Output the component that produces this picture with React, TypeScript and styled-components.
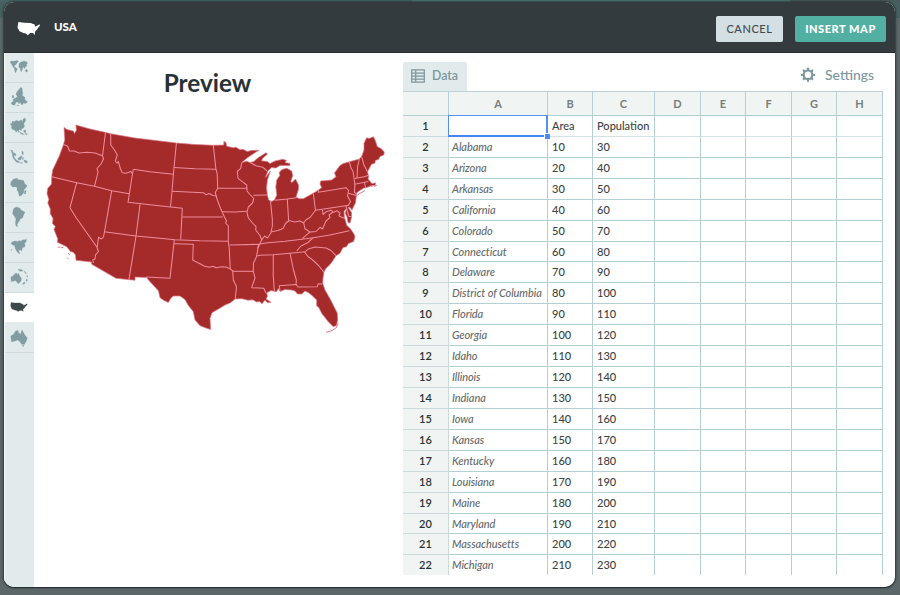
import React from "react";
import styled, { createGlobalStyle, css } from "styled-components";

const GlobalStyle = createGlobalStyle`
  * { box-sizing: border-box; }
  html, body { margin: 0; height: 100%; overflow: hidden; }
  body { font-family: Lato, "Liberation Sans", sans-serif; }
`;

const Backdrop = styled.div`
  width: 900px;
  height: 595px;
  padding: 2px 5px 8px 4px;
  background:
    linear-gradient(90deg, #456664 0 412px, #4d7a74 412px 790px, #4a5b5d 790px) 0 0 / 100% 2px no-repeat,
    linear-gradient(#46605f 0 18px, #5c676a 18px) 0 0 / 100% 100%;
`;

const Modal = styled.div`
  height: 585px;
  display: flex;
  flex-direction: column;
  border-radius: 10px;
  overflow: hidden;
  background: #fff;
  box-shadow: 0 1px 1px #263033, 0 0 2px 1px rgba(35, 45, 48, 0.75);
`;

const Header = styled.header`
  height: 51px;
  flex: none;
  display: flex;
  align-items: center;
  padding: 3px 9px 0 13px;
  background: #333b3e;
  border-bottom: 1px solid #262e30;
`;

const HeaderTitle = styled.h1`
  flex: 1;
  margin: 0 0 3px 13px;
  font-size: 11.5px;
  line-height: 16px;
  font-weight: 900;
  color: #fff;
`;

const Button = styled.button<{ $primary?: boolean }>`
  width: ${(p) => (p.$primary ? 91 : 67)}px;
  height: 26px;
  margin-left: ${(p) => (p.$primary ? 12 : 0)}px;
  padding: 0;
  border: 0;
  border-radius: 2px;
  font: ${(p) => (p.$primary ? 900 : 500)} 11px/26px Lato, sans-serif;
  letter-spacing: ${(p) => (p.$primary ? 0.55 : 0.6)}px;
  white-space: nowrap;
  color: ${(p) => (p.$primary ? "#fff" : "#3e4a4d")};
  background: ${(p) => (p.$primary ? "#52b0a3" : "#d3dfe2")};
`;

const Body = styled.div`
  flex: 1;
  min-height: 0;
  display: flex;
`;

const Sidebar = styled.nav`
  width: 30px;
  flex: none;
  border-left: 1px solid #f5f8f8;
  background: #e1ebec;
`;

const MapTab = styled.div<{ $active?: boolean }>`
  height: 30px;
  display: flex;
  align-items: center;
  justify-content: center;
  padding: 0 2px 1px 0;
  border-bottom: 1px solid #d0dbdd;
  ${(p) =>
    p.$active &&
    css`
      background: #fff;
      border-color: #e4ebec;
      padding-bottom: 3px;
    `}
  color: ${(p) => (p.$active ? "#3c484a" : "#829da2")};
`;

const PreviewPane = styled.section`
  width: 369px;
  flex: none;
  padding: 14px 0 0 6px;
`;

const PreviewTitle = styled.h2`
  width: 335px;
  margin: 0;
  text-align: center;
  font-size: 24.3px;
  line-height: 32px;
  font-weight: 700;
  color: #273235;
`;

const MapImage = styled.svg`
  display: block;
  margin-top: 16px;
`;

const DataPane = styled.section`
  width: 480px;
  flex: none;
  padding-top: 9px;
`;

const PaneBar = styled.div`
  height: 29px;
  display: flex;
  justify-content: space-between;
`;

const DataTab = styled.div`
  width: 64px;
  height: 29px;
  display: flex;
  align-items: center;
  gap: 7px;
  padding: 0 0 3px 8px;
  border-radius: 2px 2px 0 0;
  background: #e1ebec;
  color: #7b979d;
  font-size: 12.3px;
  font-weight: 600;
  svg { position: relative; top: 1px; }
`;

const SettingsLink = styled.div`
  display: flex;
  align-items: center;
  gap: 9px;
  padding: 0 9px 5px 0;
  color: #7b979d;
  font-size: 13.9px;
  font-weight: 500;
`;

const SheetFrame = styled.div`
  height: 484px;
  overflow: hidden;
  border-top: 1px solid #bcd2d5;
`;

const Sheet = styled.div`
  display: grid;
  grid-template-columns: 46px 99px 45px 62px 46px 45px 46px 45px 46px;
  grid-template-rows: 24px;
  grid-auto-rows: 20.93px;
  font-size: 11px;
`;

const HeadCell = styled.div`
  padding-top: 1px;
  border-right: 1px solid #b5d0d4;
  border-bottom: 1px solid #b5d0d4;
  background: #f0f5f4;
  text-align: center;
  line-height: 21px;
  font-weight: 700;
  color: #777d7d;
`;

const RowCell = styled(HeadCell)`
  padding: 0;
  border-color: #cbdadb;
  line-height: 19px;
  font-size: 11px;
  font-weight: 600;
  color: #2c3334;
`;

const Cell = styled.div<{ $name?: boolean; $first?: boolean }>`
  position: relative;
  padding-left: ${(p) => (p.$name ? 3 : 4)}px;
  border-right: 1px solid #b5d0d4;
  border-bottom: 1px solid ${(p) => (p.$first ? "#d3e2e4" : "#b5d0d4")};
  line-height: 19px;
  white-space: nowrap;
  color: ${(p) => (p.$name ? "#666b6c" : "#3b4445")};
  font-style: ${(p) => (p.$name ? "italic" : "normal")};
  font-weight: 500;
  letter-spacing: ${(p) => (p.$name ? "-0.09px" : "0")};
`;

const Selection = styled.div`
  position: absolute;
  inset: -1px -1px -1px -1px;
  border: 1px solid #5292f7;
  border-bottom: 2px solid #4385f5;
  border-right-width: 2px;
`;

const FillHandle = styled.div`
  position: absolute;
  z-index: 2;
  right: -3px;
  bottom: -3px;
  width: 6px;
  height: 6px;
  border: 1px solid #fff;
  border-width: 1px 0 0 1px;
  background: #4b8df8;
`;

const USA =
  "M64 127.5L67 129.5 73.3 131 74.5 133.5 76.5 130 75.8 125 90 129 105 132.3 110.7 133.7 135 138 160 141 176.7 143 195 144.5 213.3 145.3 223.8 145 223.8 141.5 225.8 142.3 226.8 146.3 233.3 147.7 236 147.3 240 149.7 243 149.3 247.3 151.5 251 150.5 259 150.2 253 154 247 158 241.7 162.6 246.7 161.2 250 162.5 254 161.5 257 158.5 262 155.3 266 152.8 267.5 154 262.5 158.5 261.5 160.8 267.3 161.5 270 163.6 275 161 283 159.3 286.5 160.5 285 162.5 289.8 163.5 290 165.6 284 165.6 280 165.4 276 168 271.5 167.6 267.8 171 265.5 177.4 270.5 171 267.5 179.5 266.5 188 267.4 195 268.6 200 271.5 201.4 274.5 200 276.8 195 275.8 187 276.7 180 279.8 175.5 279.2 172.5 282 169.5 286.7 168.3 291.7 171 292.7 175.7 290.7 181.7 292 182.5 295.5 179 298.5 185 298.5 189 296 197.2 299.3 198.7 303.3 198.7 310 195 315 192.3 321.7 187.7 320 184 320.7 181 331.7 180 336 176.7 334.5 173 340 165.5 343.3 163.5 359.3 159 361.7 156.3 364 150 364 143.3 366.7 137.7 369 138.5 373.5 136.8 375.5 141 377.3 146.8 381 148.5 384.3 152 383.8 155 380 156.5 378.5 159.5 375.5 160.3 374.8 163.3 371.5 164.2 369.5 168 367.5 171.8 368.7 177 368 179 372 183.7 375.5 182.8 375.3 185.3 371 185.8 368.3 187 363.3 188.3 359 191 356.5 193 356.3 196.5 355.5 202.7 351.9 210.2 350.2 207.5 348.2 207.4 351.5 212.5 351.6 217 350.1 223 348 222.5 347 217 345.3 213 346.6 208.3 344 211 344.4 217 345.8 222 346.8 225.5 350.2 228.5 354 234 355 237 353.5 241.5 348.5 243.5 346.4 246.8 343 247.5 340 253.3 336 255.7 333 260.5 330 264.5 325.4 269 324 272.3 323 278 322.7 283.3 325 290 330.7 300 337.3 313.3 337.7 320 336.4 325.5 333.3 326.7 328.3 321.7 321.7 313.3 318.5 307 316.7 306 316.7 300 312 295.5 308.7 292.7 305 291 301.7 294 297.5 294 295 291 291.7 290 285 289.5 280 291.5 278.3 288.5 276.5 291.7 271 290.6 266.7 292.8 267.4 296.3 266 299 271 302.3 267.8 302.8 264.8 300.2 262 303.8 259.5 301.4 256.7 302 252.8 299.8 248 300.2 242 298.7 235 299 230.5 302.8 225 305 218.5 309 212 312.7 210 318.3 210.7 329.5 206 328 200 325.7 195 320 193.3 311.7 188 305 185 299.6 180 296 173.3 296 171 298 168.3 302.5 164 300.5 160 297.7 158.5 291 154.5 286.5 150 281.7 146.5 277.5 135 277 135 280.3 116 278.3 91.7 264.3 91.5 262 76 260.3 75.5 255 73.3 252.3 70.5 251.5 66.7 246.7 57.3 242.3 57.8 239 54 229.5 55.3 226.5 52.5 223.5 53 218.5 50.2 213.5 50.3 209 47.8 203 48.9 199.5 47 193.5 47.7 188.5 51.5 184 51.7 176.7 52.7 170 59.5 155.5 63.3 145 64.8 140Z";

const STATE_BORDERS = [
  "M63.3 144.5L67.5 146 69.5 151 74 151 79 153 87 152.2 95 153 102.5 155.7",
  "M105.5 132.5L102.5 155.7 103.5 159 101 164 97 168.5 98 172 94.5 186.3",
  "M51.7 176.7L76.7 182.7 94.5 186.3 111.7 190.7 129.3 193.7",
  "M110.7 133.7L110.8 145 114.5 150 117.3 155 115.3 161 117 163.2 118.3 161.5 120.5 169 122.3 172.7 126 173.2 131 171.5 132 173.5",
  "M133.3 169.3L131.5 180 128 202.3 150 204.8 182.3 208.3",
  "M133.3 169.3L150 171.7 173.3 174.3",
  "M76.7 182.7L70 207.7 76 217.5 96.7 246.7 98.5 251.5 95.5 254.8 95 259 92.8 260 93.5 263",
  "M111.7 190.7L105.7 225 103.5 237 101.5 239 98.5 237.2 97.3 246.7",
  "M104.3 231.7L136 236 160 238.2 175 239.7 200 240.8 228.3 241.3",
  "M140 204.3L136 236 129 279.3",
  "M176.4 143L174 167.7 172 191.3 170.5 206.7",
  "M174 167.5L195 168.8 216 169.3",
  "M172 191.3L203.3 192.7 206 194.7 209 193.5 213 195.5 216.5 196",
  "M213.3 145.3L214.5 156 215.8 168.3 217.2 174 217.7 188.3 215.3 192.5 217 199 220 207 222 211.7",
  "M217.7 188.3L247.3 188.3",
  "M222 211.7L235 211.9 246.7 211.3",
  "M222 211.7L224.5 217 226.5 221 225.6 223 228.3 226 228.3 241.7 229.3 249 230.2 268.3",
  "M241.7 162.5L240.7 168.3 237.3 171.5 238 178.3 242 181.3 246.7 185 247 191 250 194.5 253.8 198.5 252.5 203 248.3 207 247 212.5 248.4 218 252.5 223 256 226.7 255.7 230 260 235.5 261.7 240 259.7 244 258 248 256.5 256.7 253.5 263 253.3 271.3 255 278 251.7 287.7 263.8 288.3 266 293",
  "M250 162.5L256 165.7 263 167.3 267 171",
  "M253.3 195.3L268 195",
  "M182.3 208.3L180.7 239.3",
  "M182.3 217L222.7 217",
  "M174.3 240L170 278.3 146 277",
  "M174 243.7L193.3 244.3 192.7 260 196 261.8 200 263.8 204 266 209 267.2 213 266.2 216 267.8 222 266.7 226 267 230 268.7 232.7 271 233.3 280 236.5 286.7 235.3 298.7",
  "M229.3 245L258.8 244.3 257.5 248.5",
  "M232.7 271.3L253.3 271.3",
  "M257.3 256L260 255.3 273.3 254.7 290 253.2 305 251.7",
  "M259.7 244L268 242.8 285 241.3 304 239 313.3 237.8 330 235 349.3 230.7",
  "M313.3 237.7L308 242.5 301 246 296.7 251",
  "M305 251.7L309 248.7 315 247 321 247.4 326 248 331 250.5 336 255.7",
  "M304.5 252L308 256.5 313.3 260.5 319 266 324 272.3",
  "M273.3 255L273.2 275 274.3 291",
  "M290 253.3L293.5 270 296.3 280 296 285",
  "M280 291L279.3 285.8 296 284.5 298 287 317.3 286.7 318.2 283.7 322 284",
  "M261.7 240L264.5 236 267.5 238 271.7 231.8 278 230.5 283 228.5 285.5 223.5 289 220.5 294.5 222 300 221 303.5 223 306 219.7 310 217.5 315.5 210.3",
  "M303.7 222.5L304.8 228.5 310 232 316 231.5 320 227.3 322.5 229 326 221 330 217.5 329 215 333 212",
  "M310 232L306.5 234.8 302.3 238.7",
  "M270.5 201L272.3 219 272.4 226 271 232",
  "M275 200.2L287.3 199 296.3 197.8",
  "M287.3 199L288.7 221.7",
  "M313.3 193.5L315.5 210.3 349 205.3",
  "M318.3 190L318.3 192.3 346 187.7 348.6 190.5 347.5 196 350.5 201.5 348.2 205.5",
  "M348.3 193.3L356.3 195.5",
  "M322.5 210L323 214.5 326 211.8 331 210.2 333.5 212.3 337 210.7 340 213 339 216 345 218.5",
  "M345.8 206L349 216.5 351.5 216.5",
  "M349.3 161.7L351 168 353 171.3 354.8 184 354.5 192.5 356.5 194",
  "M359.3 159L357.5 167 357 178",
  "M361.5 156.7L364 165 367.3 171.5",
  "M354.8 178.5L364 176.8 368 175.5",
  "M354.8 184.2L368.3 181.5",
  "M364.5 182.5L365.5 187.5",
];

const ISLANDS = [
  "M356 196.3L359 193.8 364.5 190.8",
  "M371.5 186.3L373 185.6",
  "M374.5 186.3L376.5 185.6",
  "M58 247L60 247.2M61.5 247.7L63 247.5",
  "M68.5 253.5L69.5 255M67.3 258L68.3 259",
  "M326.5 332.2L332 330.5 336.5 327.5 338 323.5",
];

function UsaMap() {
  return (
    <MapImage width="350" height="225" viewBox="40 115 350 225">
      <path d={USA} fill="#a52a2a" stroke="#e0798a" strokeWidth="0.7" strokeLinejoin="round" />
      <g fill="none" stroke="#ee8c9c" strokeWidth="1.05" strokeLinejoin="round">
        {STATE_BORDERS.map((d) => (
          <path key={d} d={d} />
        ))}
      </g>
      <g fill="none" stroke="#d9788a" strokeWidth="1" strokeLinecap="round">
        {ISLANDS.map((d) => (
          <path key={d} d={d} />
        ))}
      </g>
    </MapImage>
  );
}

/* Silhouettes on a 20 x 22 grid, one per sidebar tab. */
const REGIONS: { id: string; d: string }[] = [
  {
    id: "world",
    d: "M1 6L3 5 5 5.3 8 4.5 9.5 5.3 8 7 7 8.5 5.7 9.5 5 10.8 6.5 11.6 8.5 13 7.5 14.5 6.6 17 6 15.8 5.5 12.8 4.2 11 2.8 8.6ZM10 8L11 6.6 13 5.8 15 5 18 6 18.5 7.2 17.5 8.3 17.8 10 16.3 11 15.4 12.8 14.5 11 13.5 12 13.2 14 12.2 15.7 11.5 14 11.3 12.3 10 11.5ZM16 14.3L17.6 13.2 18.8 15 17.5 16.3Z",
  },
  {
    id: "europe",
    d: "M10 3.5L11.5 1.5 13 2 13.3 4.5 13.8 7 13.3 9.5 16 11.5 15.7 13.5 18.5 15.8 17 17.4 14.3 17 13.5 18.8 12.2 18.5 11.5 16.7 10.5 16 10.2 18 8.6 16 7 16 5.7 19.2 3.2 18.8 2 17 4.4 15 4.2 13 6.8 12 8.4 10.3 7 8.7 7.8 6ZM3 10L4.3 9 5 11.4 3.5 12ZM8 19L10 19.5 8.4 20Z",
  },
  {
    id: "asia",
    d: "M1 8L3 7.3 3 5.6 6 5.5 7 4.2 9.5 5.2 12.3 4 14 5.5 14 3.2 16 2 16.8 4 16 6 14.6 7.2 15.5 9.8 14.8 11.8 12.8 12.8 12 14.8 11.1 13.5 9.8 14 9.7 16.5 8.2 14.4 7.2 16.3 6 14.3 3.3 13.3 2.3 11.5 3 10ZM10.3 15.6L12.8 17.2 15.5 18.3 12.3 18.3ZM14.6 14.5L17 14 16.5 16.4 15 16.6ZM16.4 17.2L18.6 18 17 18.9Z",
  },
  {
    id: "southeast-asia",
    d: "M1.8 4L3.5 4.5 4.2 6.8 6.7 7.7 7 9.6 5.7 9.7 4.6 8.5 5.6 12.2 8 14.5 10.7 15.8 10 16.8 7.3 16 4 12 3.3 7.7ZM9 12.2L11.2 10.8 12.2 9.5 13 10.7 11.6 14 9.2 13.7ZM12.8 5.5L14.2 5.8 14.3 8.8 13 8ZM13 12L14.5 11.5 14 14ZM14.8 14L17.8 14.7 18.5 17 15.6 16.3ZM11.5 16.4L14 17 11.3 17.3Z",
  },
  {
    id: "africa",
    d: "M2 6L4.2 3.2 8.4 2.2 9 3.7 12.4 4.1 14.5 4.5 16 8.2 18 9.5 17.5 11 14.8 14 15 16 12.7 19.2 10.3 20.3 9.3 16 8 14 8.3 11.5 6.3 10.8 3.5 11 1.6 8.5ZM15.7 15L17.2 14.2 16.5 17.8 15.2 18Z",
  },
  {
    id: "south-america",
    d: "M5.2 2L7.8 1 11 2.3 12 4.1 16 6.2 14.5 9 13.7 11.7 11.2 13 10.4 15 9 16.7 8 19 8.8 20.7 7 20 6.4 17 7 13 5.4 10.3 3.5 7.5 4.2 4Z",
  },
  {
    id: "north-america",
    d: "M2 7.5L3.3 5.7 6 5 8.5 5.4 10.8 4.6 12 5.6 13 4 17.6 3.5 17 6 15.3 7.3 16.2 9.3 15.5 11 13.7 11.5 13 13.2 13 15 11.4 13.8 9.7 14.8 10 16.3 11.3 17.4 9.4 17.2 7.8 15.2 6.2 12.5 5.7 9.6 3.5 9ZM1.8 13.5L3.1 14 2.2 14.5Z",
  },
  {
    id: "oceania",
    d: "M1.8 11.2L4.5 9.4 6 7.6 8 7.2 8.5 8.7 9.7 7.2 10.5 9.5 12.5 12.4 12 14.9 9.6 17.7 7.6 16 6.8 14.5 3.8 15.3 2.3 15.6ZM9 3.5L12.5 3.4 14 5 11 5.2ZM15 5L17.5 7 16.8 7.8ZM18 9L18.7 11 17.8 11ZM17.3 13L18.7 14 17 15.5ZM15.4 16L16.3 17.2 14 18.5 13.3 18Z",
  },
  {
    id: "usa",
    d: "M2 7.5L5.3 8 11.4 8 12.7 9 14 9.2 14.6 10.6 16.8 9.6 18 8.8 18.2 9.8 16.5 11.3 15.4 13.1 14 14.3 14.2 16.5 13.2 15.4 10.7 15.4 9 16.5 7.7 15.4 5.8 15 3 14 1.7 11Z",
  },
  {
    id: "australia",
    d: "M1.8 10L5 8 6.2 5.4 8.6 4.2 9.6 5.4 9.2 6.7 11.7 8 13 3.8 14.3 6.3 16 9.2 18.3 12 17.4 15 15.3 18.5 12.5 18.2 11 15.8 8.6 14 5.7 15.2 2.4 15.8ZM13.2 19.4L15 19.4 14.2 20.8Z",
  },
];

function RegionIcon({ d }: { d: string }) {
  return (
    <svg width="20" height="22" viewBox="0 0 20 22">
      <path d={d} fill="currentColor" stroke="currentColor" strokeWidth="0.3" />
    </svg>
  );
}

function HeaderIcon() {
  return (
    <svg width="24" height="16" viewBox="0 0 24 16">
      <path
        fill="#fff"
        d="M1.4 1L7 1.7 13.8 1.9 16 3.1 17.5 3.2 18 5.5 20.2 4.7 22.4 3.2 23 4.4 21.3 6.5 20 8.4 18 10.7 18 14 16.9 13 16 12 13.2 12 10.8 14.2 9 12.6 6.4 12 2.5 10.2 .5 6.4Z"
      />
    </svg>
  );
}

function TableIcon() {
  return (
    <svg width="14" height="14" viewBox="0 0 14 14" fill="none" stroke="currentColor" strokeWidth="1.25">
      <path d="M.7.8H13.3V13.2H.7ZM4.7.8V13.2M.7 4H13.3M.7 7.1H13.3M.7 10.2H13.3" />
    </svg>
  );
}

function GearIcon() {
  const teeth = [0, 45, 90, 135, 180, 225, 270, 315];
  return (
    <svg width="16" height="16" viewBox="0 0 16 16">
      <circle cx="8" cy="8.8" r="4.3" fill="none" stroke="currentColor" strokeWidth="2" />
      {teeth.map((a) => (
        <path key={a} d="M6.6 4.5L7.1 1.8H8.9L9.4 4.5Z" fill="currentColor" transform={`rotate(${a} 8 8.8)`} />
      ))}
    </svg>
  );
}

const COLUMNS = ["A", "B", "C", "D", "E", "F", "G", "H"];
const STATES = [
  "Alabama", "Arizona", "Arkansas", "California", "Colorado", "Connecticut", "Delaware",
  "District of Columbia", "Florida", "Georgia", "Idaho", "Illinois", "Indiana", "Iowa", "Kansas",
  "Kentucky", "Louisiana", "Maine", "Maryland", "Massachusetts", "Michigan",
];
const ROWS: string[][] = [
  ["", "Area", "Population"],
  ...STATES.map((name, i) => [name, String(10 * (i + 1)), String(10 * (i + 3))]),
];

export default function App() {
  return (
    <Backdrop>
      <GlobalStyle />
      <Modal>
        <Header>
          <HeaderIcon />
          <HeaderTitle>USA</HeaderTitle>
          <Button>CANCEL</Button>
          <Button $primary>INSERT MAP</Button>
        </Header>
        <Body>
          <Sidebar>
            {REGIONS.map((r) => (
              <MapTab key={r.id} $active={r.id === "usa"}>
                <RegionIcon d={r.d} />
              </MapTab>
            ))}
          </Sidebar>
          <PreviewPane>
            <PreviewTitle>Preview</PreviewTitle>
            <UsaMap />
          </PreviewPane>
          <DataPane>
            <PaneBar>
              <DataTab>
                <TableIcon />
                Data
              </DataTab>
              <SettingsLink>
                <GearIcon />
                Settings
              </SettingsLink>
            </PaneBar>
            <SheetFrame>
              <Sheet>
                <HeadCell />
                {COLUMNS.map((c) => (
                  <HeadCell key={c}>{c}</HeadCell>
                ))}
                {ROWS.map((row, r) => (
                  <React.Fragment key={r}>
                    <RowCell>{r + 1}</RowCell>
                    {COLUMNS.map((c, i) => (
                      <Cell key={c} $name={i === 0} $first={r === 0}>
                        {row[i]}
                        {r === 0 && i === 0 && (
                          <>
                            <Selection />
                            <FillHandle />
                          </>
                        )}
                      </Cell>
                    ))}
                  </React.Fragment>
                ))}
              </Sheet>
            </SheetFrame>
          </DataPane>
        </Body>
      </Modal>
    </Backdrop>
  );
}
